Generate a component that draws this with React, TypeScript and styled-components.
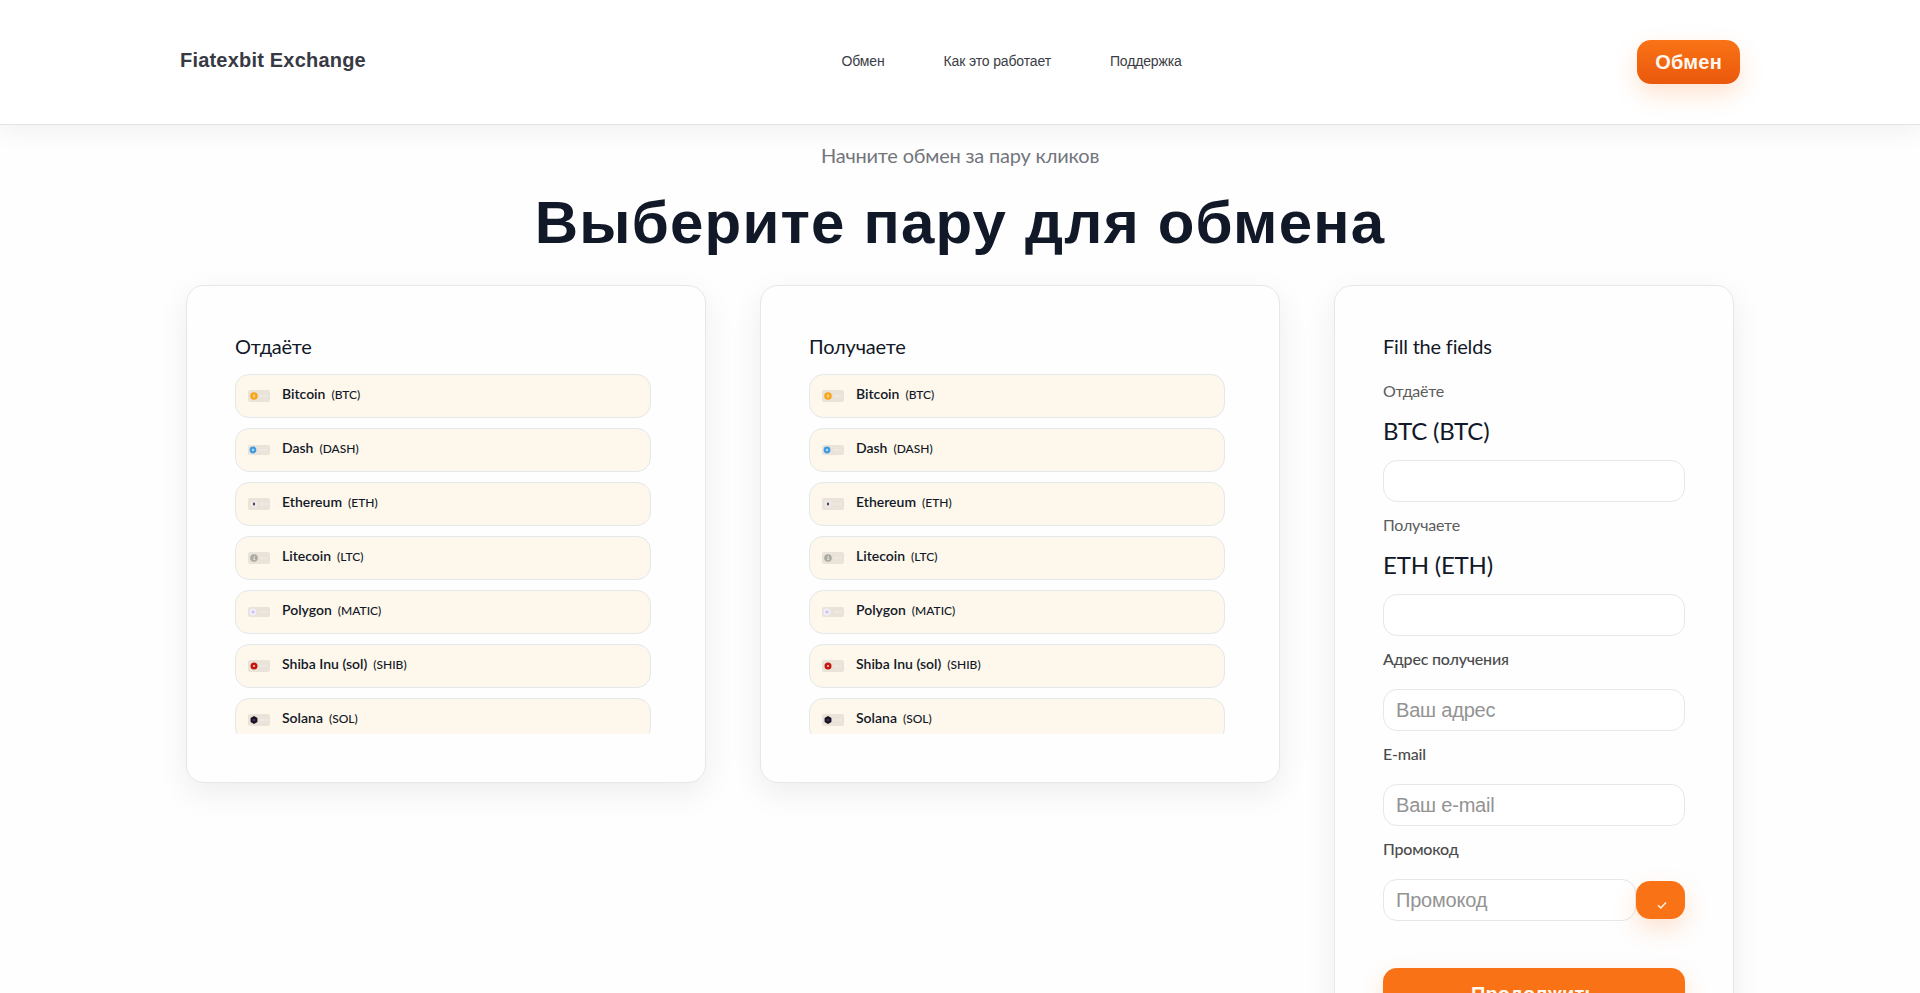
import React from "react";
import styled, { createGlobalStyle } from "styled-components";

const sans = `"Liberation Sans", Arial, sans-serif`;
const lato = `Lato, "Open Sans", sans-serif`;

const GlobalStyle = createGlobalStyle`
  *, *::before, *::after { box-sizing: border-box; }
  body {
    margin: 0;
    background: #fefefe;
    color: #111827;
    font-family: ${lato};
    font-size: 20px;
    letter-spacing: -0.01em;
  }
  h1, h2, p, ul { margin: 0; padding: 0; }
`;

const Header = styled.header`
  position: relative;
  background: #fff;
  border-bottom: 1px solid #e3e4e6;
  box-shadow: 0 6px 24px rgba(0, 0, 0, 0.06);
`;

const HeaderInner = styled.div`
  max-width: 1560px;
  margin: 0 auto;
  padding: 40px 0;
  display: flex;
  align-items: center;
  justify-content: space-between;
`;

const Brand = styled.a`
  font: 700 20px/24px ${sans};
  letter-spacing: 0.01em;
  color: #373a43;
  text-decoration: none;
  padding-bottom: 4px;
`;

const Nav = styled.nav`
  display: flex;
  gap: 59px;
  padding: 0 0 2px 20px;
`;

const NavLink = styled.a`
  font: 400 14px/20px ${sans};
  letter-spacing: -0.01em;
  color: #3a3d45;
  text-decoration: none;
`;

const Button = styled.button`
  border: 0;
  border-radius: 14px;
  background: #f97316;
  color: #fff7ed;
  font: 700 20px/24px ${sans};
  letter-spacing: 0.01em;
  cursor: pointer;
  box-shadow: 0 10px 24px rgba(249, 115, 22, 0.2);
`;

const HeaderButton = styled(Button)`
  height: 44px;
  padding: 0 18px;
  background: linear-gradient(#f97316, #ea580c);
`;

const Main = styled.main`
  max-width: 1548px;
  margin: 0 auto;
  padding: 15px 0 60px;
`;

const Lead = styled.p`
  text-align: center;
  font-size: 20px;
  line-height: 30px;
  color: #73757d;
`;

const Title = styled.h1`
  padding: 15px 0 24px;
  text-align: center;
  font: 700 60px/76px ${sans};
  letter-spacing: 0.02em;
`;

const Columns = styled.div`
  display: grid;
  grid-template-columns: 13fr 13fr 10fr;
  gap: 54px;
  align-items: start;
`;

const Card = styled.section`
  padding: 48px;
  background: #fefefe;
  border: 1px solid #e5e7eb;
  border-radius: 18px;
  box-shadow: 0 10px 32px rgba(0, 0, 0, 0.07);
`;

const CardTitle = styled.h2`
  height: 40px;
  font-weight: 400;
  font-size: 20px;
  line-height: 24px;
`;

const CoinList = styled.ul`
  list-style: none;
  display: flex;
  flex-direction: column;
  gap: 10px;
  height: 360px;
  padding-right: 6px;
  overflow-y: auto;
  scrollbar-width: none;
`;

const CoinButton = styled.button`
  width: 100%;
  height: 44px;
  display: flex;
  align-items: center;
  padding: 0 12px;
  border: 1px solid #e5e7eb;
  border-radius: 14px;
  background: #fef7eb;
  color: #111827;
  font-family: ${lato};
  cursor: pointer;
`;

const CoinIcon = styled.svg`
  width: 22px;
  height: 14px;
  margin-right: 12px;
`;

const CoinLabel = styled.span`
  padding-bottom: 4px;
  font-weight: 600;
  font-size: 14px;
  line-height: 20px;
`;

const CoinCode = styled.small`
  margin-left: 6px;
  font-weight: 500;
  font-size: 12px;
`;

const Form = styled.form`
  display: flex;
  flex-direction: column;
  padding-top: 5px;
`;

const Field = styled.div`
  display: flex;
  flex-direction: column;
  margin-bottom: 11px;
`;

const Label = styled.label<{ $strong?: boolean }>`
  font-size: 16px;
  line-height: 24px;
  font-weight: ${(p) => (p.$strong ? 500 : 400)};
  color: ${(p) => (p.$strong ? "#4b4b4b" : "#5c5c5c")};
  margin-bottom: ${(p) => (p.$strong ? "18px" : "11px")};
`;

const Pair = styled.p`
  font-size: 24px;
  line-height: 34px;
  margin-bottom: 12px;
`;

const Input = styled.input`
  width: 100%;
  min-width: 0;
  height: 42px;
  padding: 0 12px;
  border: 1px solid #e5e7eb;
  border-radius: 14px;
  background: #fff;
  color: #111827;
  font: 400 20px/24px ${sans};
  letter-spacing: -0.01em;
  &::placeholder { color: #939393; opacity: 1; }
`;

const PromoRow = styled.div`
  display: flex;
  align-items: center;
`;

const ApplyButton = styled(Button)`
  flex: none;
  width: 49px;
  height: 38px;
  padding: 10px 0 0 3px;
  display: flex;
  align-items: center;
  justify-content: center;
`;

const SubmitButton = styled(Button)`
  height: 52px;
  margin-top: 36px;
`;

type Coin = { name: string; code: string };

const coins: Coin[] = [
  { name: "Bitcoin", code: "BTC" },
  { name: "Dash", code: "DASH" },
  { name: "Ethereum", code: "ETH" },
  { name: "Litecoin", code: "LTC" },
  { name: "Polygon", code: "MATIC" },
  { name: "Shiba Inu (sol)", code: "SHIB" },
  { name: "Solana", code: "SOL" },
];

const marks: Record<string, React.ReactNode> = {
  BTC: (
    <>
      <circle cx="6" cy="7" r="3.8" fill="#f7a51d" />
      <ellipse cx="6" cy="7" rx="1.2" ry="1.8" fill="#fbd28c" />
    </>
  ),
  DASH: (
    <>
      <circle cx="5" cy="7" r="3.4" fill="#3f9be0" />
      <circle cx="5" cy="7" r="1.2" fill="#b4dbf6" />
    </>
  ),
  ETH: (
    <>
      <circle cx="6" cy="7" r="3.4" fill="#efecec" />
      <path d="M6 5L7.2 7L6 9L4.8 7Z" fill="#3a3350" />
    </>
  ),
  LTC: (
    <>
      <circle cx="6" cy="7" r="3.8" fill="#aaa9a2" />
      <path d="M6.6 5L5.6 8.6H7.4" fill="none" stroke="#ecebe6" strokeWidth="0.9" />
    </>
  ),
  MATIC: (
    <>
      <circle cx="5" cy="7" r="3.4" fill="#f5f0fd" />
      <circle cx="5" cy="7" r="1.8" fill="#d3c4f6" />
    </>
  ),
  SHIB: (
    <>
      <circle cx="6" cy="7" r="3.5" fill="#c4170c" />
      <circle cx="6" cy="7" r="1.1" fill="#f6c9b8" />
    </>
  ),
  SOL: (
    <>
      <path d="M6 3L9.4 5V9L6 11L2.6 9V5Z" fill="#16121f" />
      <circle cx="6" cy="7" r="1.6" fill="#3b2f58" />
    </>
  ),
};

function CoinMark({ code }: { code: string }) {
  const slim = code === "DASH" || code === "MATIC";
  return (
    <CoinIcon viewBox="0 0 22 14" aria-hidden="true">
      <rect x="0" y={slim ? 2 : 1} width="22" height={slim ? 10 : 12} rx="2" fill="#e9e3da" />
      <path d="M12 7H19" stroke="#efeae2" strokeWidth="2" strokeDasharray="2 0.6" />
      {marks[code]}
    </CoinIcon>
  );
}

function CoinCard({ title }: { title: string }) {
  return (
    <Card>
      <CardTitle>{title}</CardTitle>
      <CoinList>
        {coins.map((c) => (
          <li key={c.code}>
            <CoinButton type="button">
              <CoinMark code={c.code} />
              <CoinLabel>
                {c.name}
                <CoinCode>({c.code})</CoinCode>
              </CoinLabel>
            </CoinButton>
          </li>
        ))}
      </CoinList>
    </Card>
  );
}

export default function App() {
  return (
    <>
      <GlobalStyle />
      <Header>
        <HeaderInner>
          <Brand href="#">Fiatexbit Exchange</Brand>
          <Nav>
            <NavLink href="#exchange">Обмен</NavLink>
            <NavLink href="#how">Как это работает</NavLink>
            <NavLink href="#support">Поддержка</NavLink>
          </Nav>
          <HeaderButton type="button">Обмен</HeaderButton>
        </HeaderInner>
      </Header>
      <Main id="exchange">
        <Lead>Начните обмен за пару кликов</Lead>
        <Title>Выберите пару для обмена</Title>
        <Columns>
          <CoinCard title="Отдаёте" />
          <CoinCard title="Получаете" />
          <Card>
            <CardTitle>Fill the fields</CardTitle>
            <Form onSubmit={(e) => e.preventDefault()}>
              <Field>
                <Label htmlFor="give">Отдаёте</Label>
                <Pair>BTC (BTC)</Pair>
                <Input id="give" type="text" />
              </Field>
              <Field>
                <Label htmlFor="get">Получаете</Label>
                <Pair>ETH (ETH)</Pair>
                <Input id="get" type="text" />
              </Field>
              <Field>
                <Label $strong htmlFor="address">Адрес получения</Label>
                <Input id="address" type="text" placeholder="Ваш адрес" />
              </Field>
              <Field>
                <Label $strong htmlFor="email">E-mail</Label>
                <Input id="email" type="email" placeholder="Ваш e-mail" />
              </Field>
              <Field>
                <Label $strong htmlFor="promo">Промокод</Label>
                <PromoRow>
                  <Input id="promo" type="text" placeholder="Промокод" />
                  <ApplyButton type="button" aria-label="Применить">
                    <svg width="10" height="10" viewBox="0 0 10 10" fill="none" stroke="#fff7ed" strokeWidth="1.4">
                      <path d="M1 5.2L3.8 8L9 2.4" />
                    </svg>
                  </ApplyButton>
                </PromoRow>
              </Field>
              <SubmitButton type="submit">Продолжить</SubmitButton>
            </Form>
          </Card>
        </Columns>
      </Main>
    </>
  );
}
